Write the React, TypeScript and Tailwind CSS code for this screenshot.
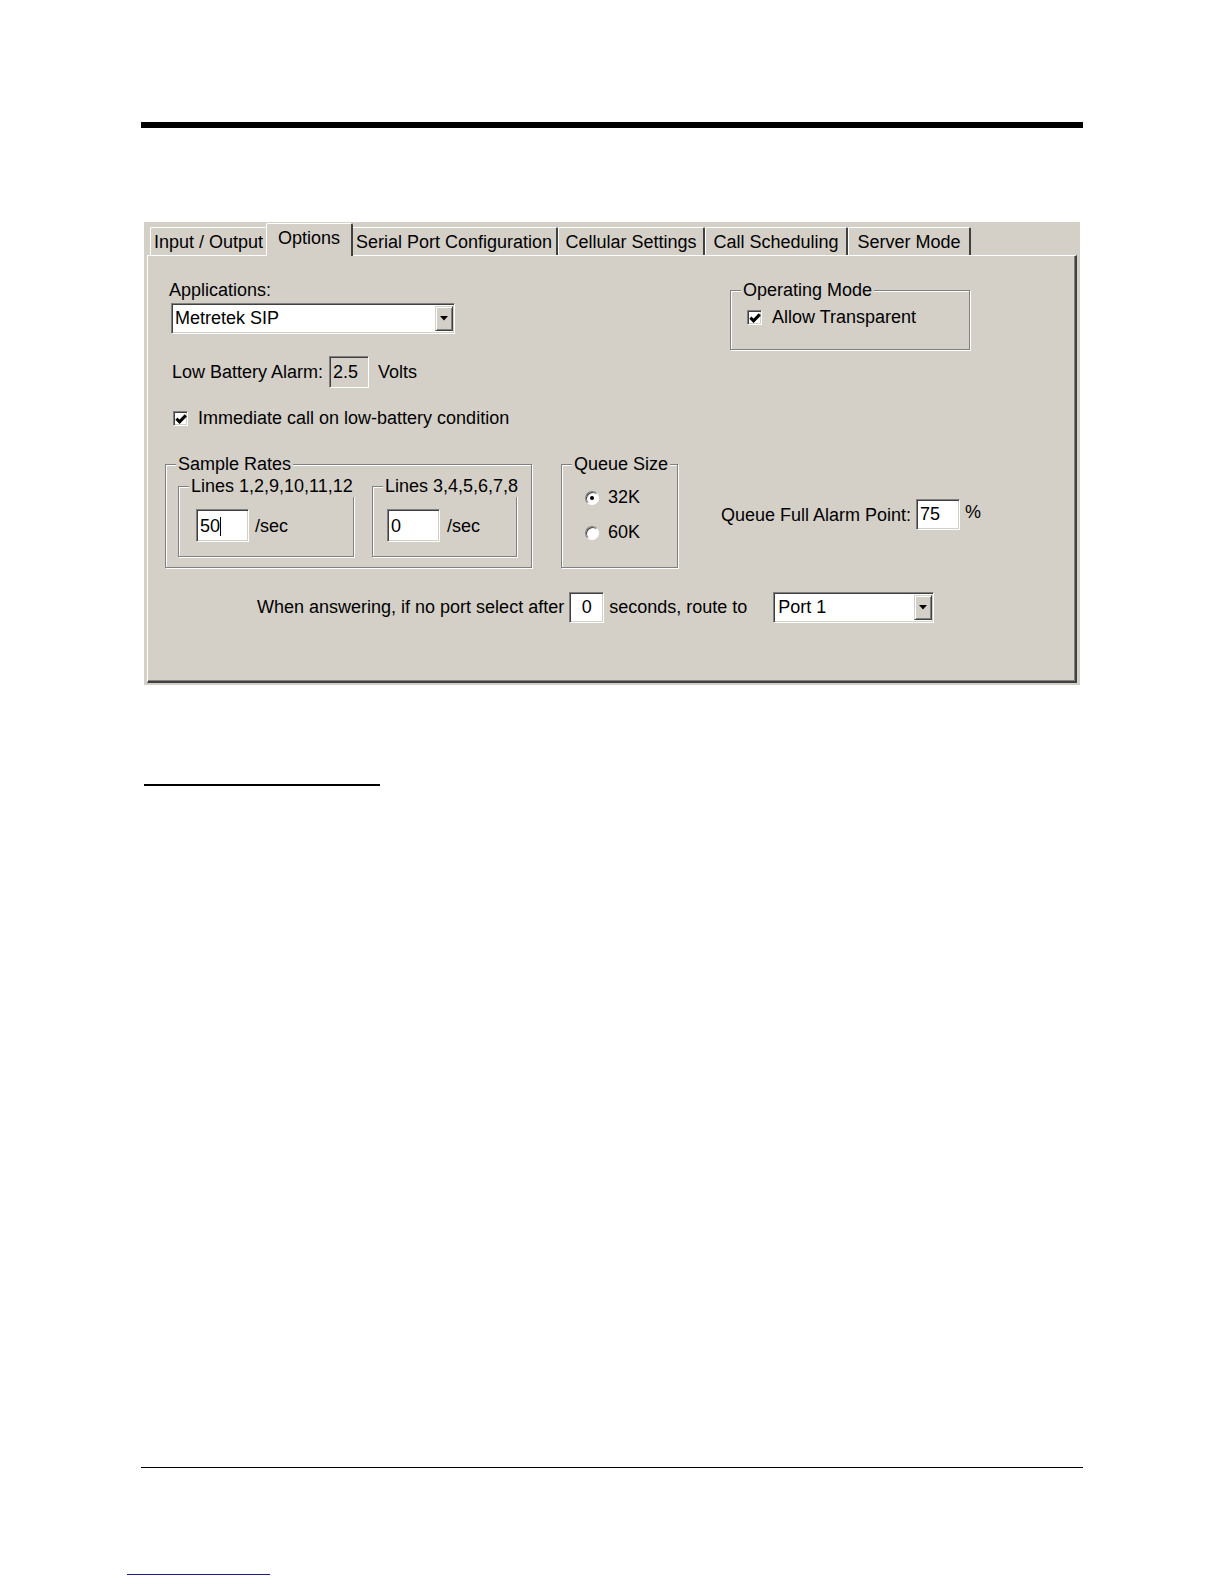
import React from 'react';

// classic Win2000 style bevels
const sunken =
  'border border-t-[#808080] border-l-[#808080] border-b-white border-r-white shadow-[inset_1px_1px_0_#404040,inset_-1px_-1px_0_#d4d0c8]';
const raised =
  'border border-t-[#d4d0c8] border-l-[#d4d0c8] border-b-[#404040] border-r-[#404040] shadow-[inset_1px_1px_0_#ffffff,inset_-1px_-1px_0_#808080] bg-[#d4d0c8]';
const etched = 'border border-[#808080] shadow-[inset_1px_1px_0_#ffffff,1px_1px_0_#ffffff]';

const tabs = [
  { label: 'Input / Output', w: 'w-[118px]' },
  { label: 'Options', w: 'w-[87px]', active: true },
  { label: 'Serial Port Configuration', w: 'w-[207px]' },
  { label: 'Cellular Settings', w: 'w-[147px]' },
  { label: 'Call Scheduling', w: 'w-[143px]' },
  { label: 'Server Mode', w: 'w-[123px]' },
];

const ArrowButton: React.FC = () => (
  <div className={`${raised} w-[18px] h-[25px] flex items-center justify-center`}>
    <svg width="8" height="5" viewBox="0 0 8 5">
      <path d="M0 0h8L4 4.5z" fill="#000" />
    </svg>
  </div>
);

const CheckBox: React.FC = () => (
  <div className={`${sunken} w-[15px] h-[15px] bg-white flex items-center justify-center shrink-0`}>
    <svg width="12" height="12" viewBox="0 0 11 11">
      <path d="M1.3 5.2l2.9 2.9L9.9 2.2" stroke="#000" strokeWidth="2.8" fill="none" />
    </svg>
  </div>
);

const Radio: React.FC<{ on?: boolean }> = ({ on }) => (
  <div className="w-[14px] h-[14px] rounded-full bg-white border border-t-[#808080] border-l-[#808080] border-b-white border-r-white shadow-[inset_1px_1px_0_#404040] flex items-center justify-center shrink-0">
    {on && <div className="w-[4px] h-[4px] rounded-full bg-black" />}
  </div>
);

const Legend: React.FC<{ text: string }> = ({ text }) => (
  <span className="absolute -top-[11px] left-[10px] px-[2px] bg-[#d4d0c8] leading-[21px] whitespace-nowrap">{text}</span>
);

const App: React.FC = () => {
  return (
    <div className="w-[1224px] h-[1584px] bg-white flex flex-col font-['Liberation_Sans',Arial,sans-serif] text-[18px] text-black">
      {/* header rule */}
      <div className="mt-[122px] ml-[141px] w-[942px] h-[6px] bg-black" />

      {/* dialog screenshot */}
      <div className="mt-[94px] ml-[144px] w-[936px] h-[463px] bg-[#d4d0c8] flex flex-col">
        {/* tab strip */}
        <div className="flex items-end pl-[6px] h-[33px] relative z-10">
          {tabs.map(t =>
            t.active ? (
              <div
                key={t.label}
                className={`${t.w} -mx-[2px] h-[33px] -mb-[1px] bg-[#d4d0c8] border-t border-l border-t-white border-l-white border-r-2 border-r-[#404040] rounded-t-[2px] flex items-center justify-center leading-[21px] pb-[4px] relative z-10`}
              >
                {t.label}
              </div>
            ) : (
              <div
                key={t.label}
                className={`${t.w} h-[28px] border-t border-l border-t-white border-l-white border-r-2 border-r-[#404040] rounded-t-[2px] flex items-center justify-center leading-[21px] pt-[1px]`}
              >
                {t.label}
              </div>
            )
          )}
        </div>

        {/* tab page */}
        <div className="ml-[3px] w-[930px] h-[428px] border-t border-l border-t-white border-l-white border-r-2 border-b-2 border-r-[#404040] border-b-[#404040] shadow-[inset_-1px_-1px_0_#808080] pl-[17px] flex flex-col leading-[21px]">
          <div className="flex">
            {/* left column */}
            <div className="w-[400px] flex flex-col">
              <div className="mt-[24px] ml-[4px]">Applications:</div>
              <div className={`${sunken} mt-[2px] ml-[6px] w-[284px] h-[31px] bg-white flex items-center justify-between pl-[3px] pr-[1px]`}>
                <span>Metretek SIP</span>
                <ArrowButton />
              </div>
              <div className="mt-[22px] ml-[7px] flex items-center h-[32px]">
                <span>Low Battery Alarm:</span>
                <div className={`${sunken} ml-[6px] w-[40px] h-[32px] bg-[#d4d0c8] flex items-center pl-[3px]`}>2.5</div>
                <span className="ml-[9px]">Volts</span>
              </div>
              <div className="mt-[20px] ml-[8px] flex items-center gap-[10px] h-[21px]">
                <CheckBox />
                <span>Immediate call on low-battery condition</span>
              </div>
            </div>

            {/* operating mode */}
            <div className={`${etched} relative mt-[34px] ml-[165px] w-[240px] h-[60px]`}>
              <Legend text="Operating Mode" />
              <div className="flex items-center gap-[10px] ml-[16px] mt-[16px] h-[21px]">
                <CheckBox />
                <span>Allow Transparent</span>
              </div>
            </div>
          </div>

          {/* group row */}
          <div className="flex mt-[35px]">
            <div className={`${etched} relative w-[367px] h-[104px] flex gap-[18px] pl-[12px] pt-[21px]`}>
              <Legend text="Sample Rates" />
              <div className={`${etched} relative w-[176px] h-[71px] pl-[17px] pt-[22px]`}>
                <Legend text="Lines 1,2,9,10,11,12" />
                <div className="flex items-center">
                  <div className={`${sunken} w-[53px] h-[33px] bg-white flex items-center pl-[3px] pt-[2px]`}>
                    50<span className="w-px h-[19px] bg-black" />
                  </div>
                  <span className="ml-[6px] pt-[2px]">/sec</span>
                </div>
              </div>
              <div className={`${etched} relative w-[145px] h-[71px] pl-[14px] pt-[22px]`}>
                <Legend text="Lines 3,4,5,6,7,8" />
                <div className="flex items-center">
                  <div className={`${sunken} w-[53px] h-[33px] bg-white flex items-center pl-[3px] pt-[2px]`}>0</div>
                  <span className="ml-[7px] pt-[2px]">/sec</span>
                </div>
              </div>
            </div>

            <div className={`${etched} relative ml-[29px] w-[117px] h-[104px] pl-[23px] pt-[22px] flex flex-col gap-[14px]`}>
              <Legend text="Queue Size" />
              <div className="flex items-center gap-[9px] h-[21px]">
                <Radio on />
                <span>32K</span>
              </div>
              <div className="flex items-center gap-[9px] h-[21px]">
                <Radio />
                <span>60K</span>
              </div>
            </div>

            <div className="ml-[43px] mt-[35px] flex items-start h-[31px]">
              <span className="mt-[6px]">Queue Full Alarm Point:</span>
              <div className={`${sunken} ml-[5px] w-[44px] h-[31px] bg-white flex items-center pl-[3px]`}>75</div>
              <span className="ml-[5px] mt-[3px]">%</span>
            </div>
          </div>

          {/* routing row */}
          <div className="flex items-center mt-[24px] ml-[92px] h-[31px]">
            <span>When answering, if no port select after</span>
            <div className={`${sunken} ml-[5px] w-[35px] h-[31px] bg-white flex items-center justify-center`}>0</div>
            <span className="ml-[5px]">seconds, route to</span>
            <div className={`${sunken} ml-[26px] w-[161px] h-[31px] bg-white flex items-center justify-between pl-[4px] pr-[1px]`}>
              <span>Port 1</span>
              <ArrowButton />
            </div>
          </div>
        </div>
      </div>

      {/* section underline */}
      <div className="mt-[99px] ml-[144px] w-[236px] h-[2px] bg-black" />

      {/* footer rule */}
      <div className="mt-[681px] ml-[141px] w-[942px] h-px bg-black" />

      {/* footer link underline */}
      <div className="mt-[106px] ml-[127px] w-[143px] h-px bg-[#1a1a8c]" />
    </div>
  );
};

export default App;
